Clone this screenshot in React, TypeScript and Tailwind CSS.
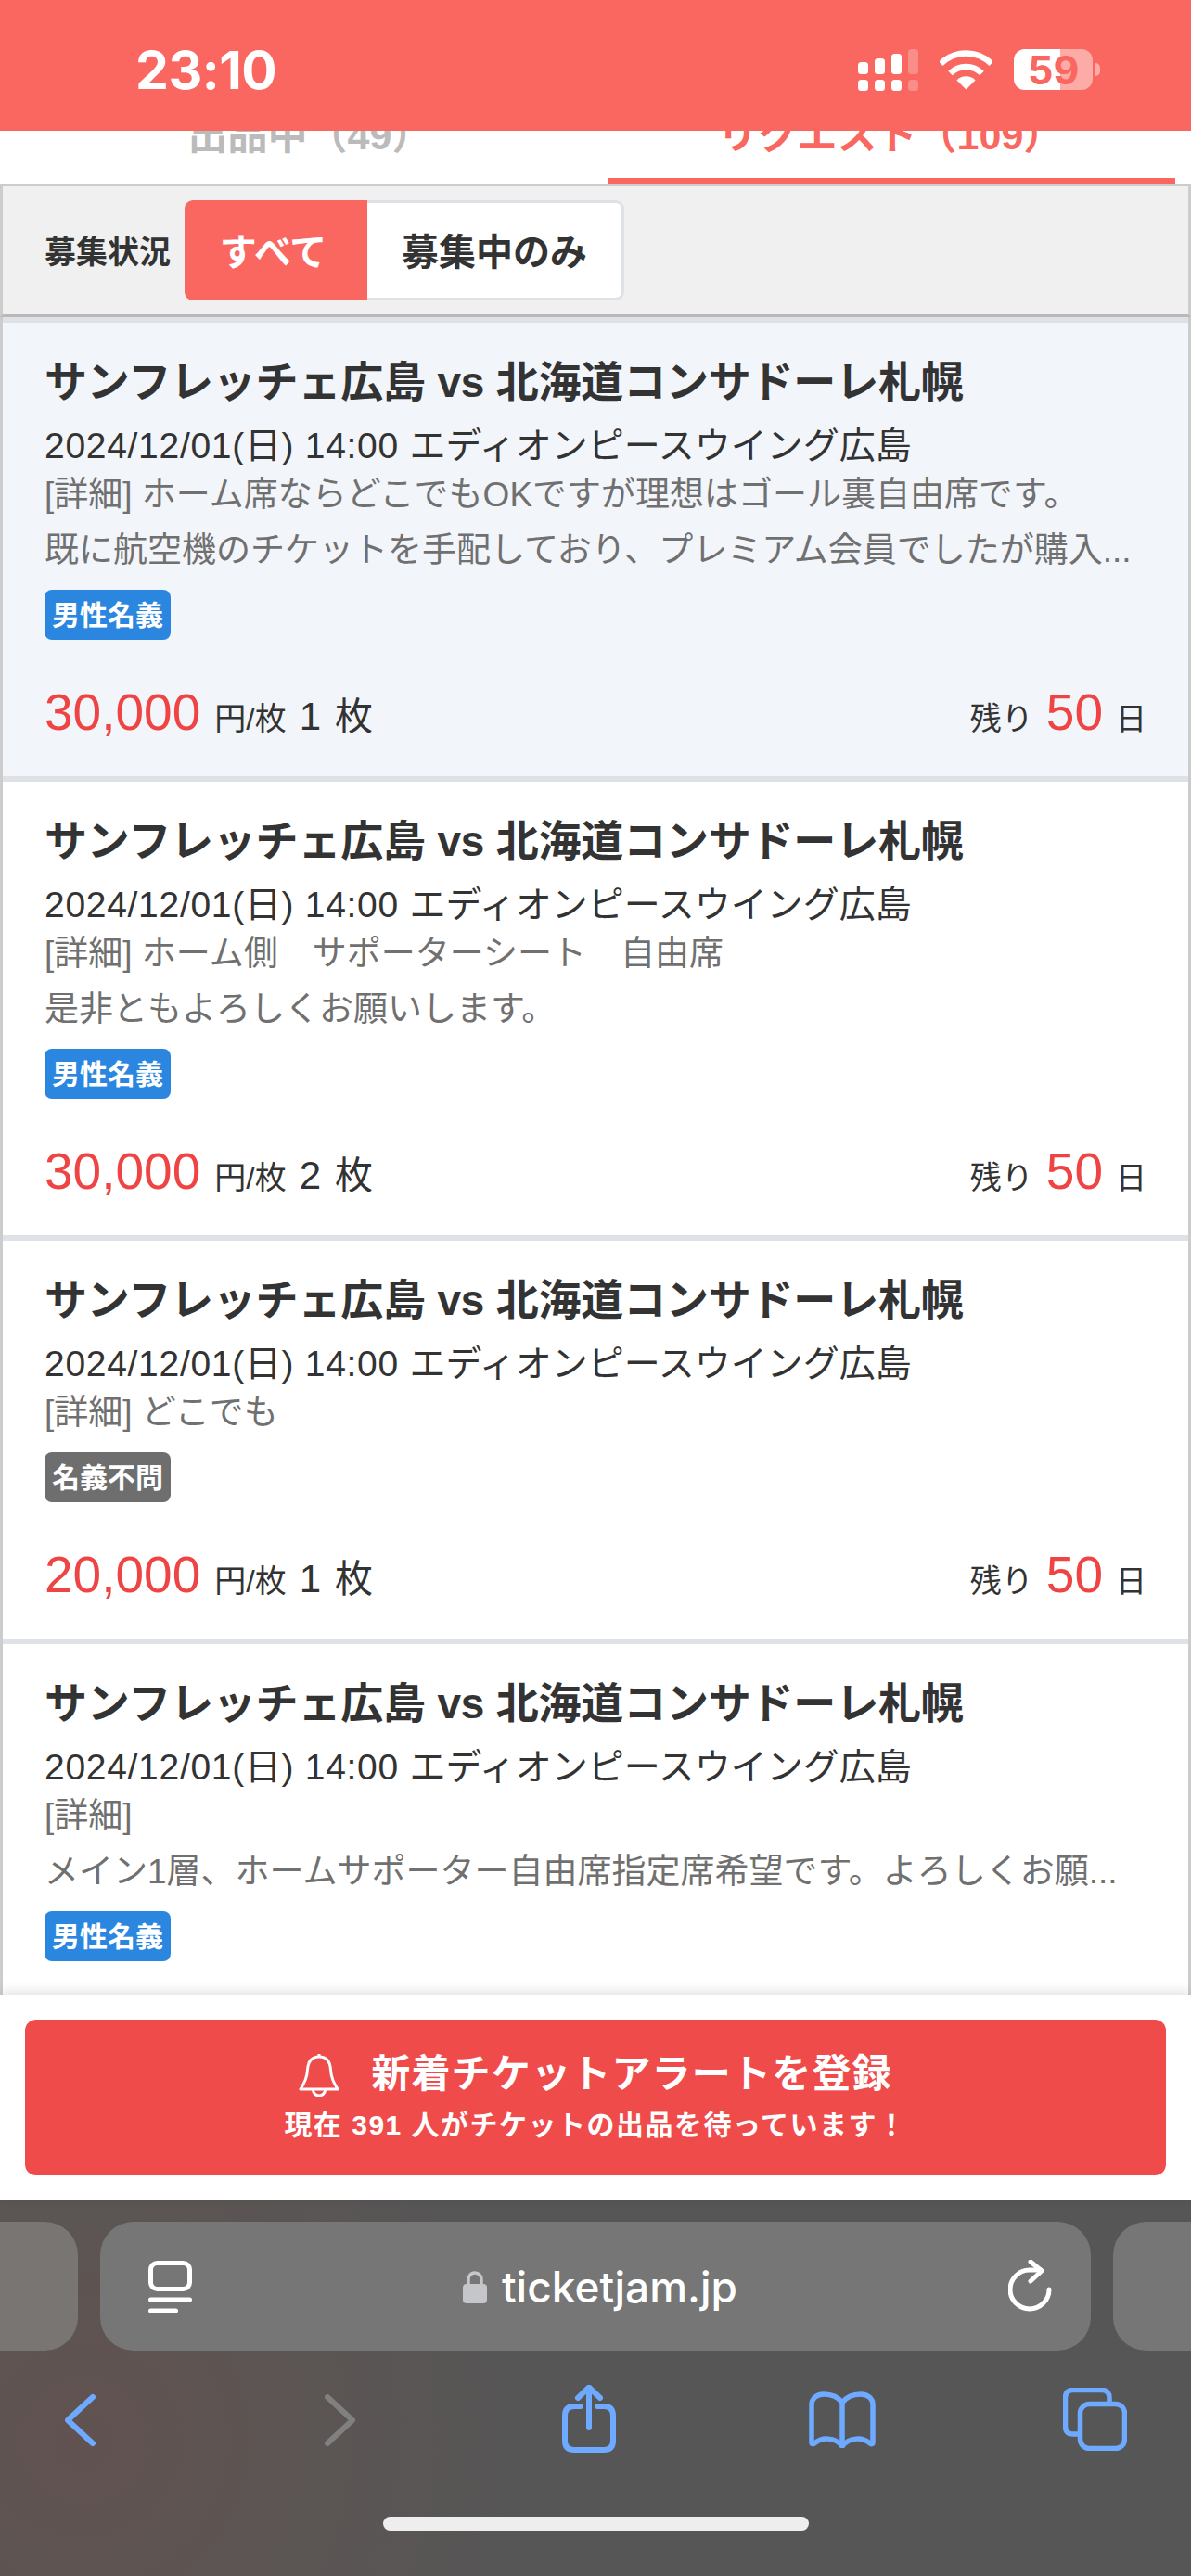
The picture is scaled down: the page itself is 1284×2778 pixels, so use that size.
const tickets = [
  {
    detail: '[詳細] ホーム席ならどこでもOKですが理想はゴール裏自由席です。',
    note: '既に航空機のチケットを手配しており、プレミアム会員でしたが購入...',
    badge: '男性名義',
    price: '30,000',
    count: 1,
    highlight: true,
  },
  {
    detail: '[詳細] ホーム側　サポーターシート　自由席',
    note: '是非ともよろしくお願いします。',
    badge: '男性名義',
    price: '30,000',
    count: 2,
  },
  { detail: '[詳細] どこでも', badge: '名義不問', price: '20,000', count: 1 },
  {
    detail: '[詳細]',
    note: 'メイン1層、ホームサポーター自由席指定席希望です。よろしくお願...',
    badge: '男性名義',
    price: '',
    count: 0,
  },
];

const StatusBar = () => (
  <div className="relative z-10 h-[141px] shrink-0 bg-[#f96760] text-white">
    <span className="absolute left-[146px] top-[46px] text-[57px] leading-[60px] font-bold tracking-[-0.5px] [font-family:Inter,sans-serif]">
      23:10
    </span>
    <svg className="absolute left-[925px] top-[53px]" width="65" height="45" viewBox="0 0 65 45" fill="#fff">
      <rect x="0" y="14" width="11" height="13" rx="3.5" />
      <rect x="18" y="10" width="11" height="17" rx="3.5" />
      <rect x="36" y="5" width="11" height="22" rx="3.5" />
      <rect x="54" y="0" width="11" height="27" rx="3.5" opacity="0.25" />
      <rect x="0" y="33" width="11" height="12" rx="3.5" />
      <rect x="18" y="33" width="11" height="12" rx="3.5" />
      <rect x="36" y="33" width="11" height="12" rx="3.5" />
      <rect x="54" y="33" width="11" height="12" rx="3.5" opacity="0.25" />
    </svg>
    <svg className="absolute left-[1013px] top-[53px]" width="57" height="44" viewBox="0 0 57 43" fill="none" stroke="#fff">
      <path d="M1.2 15.3 A38.5 38.5 0 0 1 55.8 15.3" strokeWidth="6.5" />
      <path d="M11.5 25.5 A24 24 0 0 1 45.5 25.5" strokeWidth="6.5" />
      <path d="M28.5 43 L18.5 33 A14 14 0 0 1 38.5 33 Z" fill="#fff" stroke="none" />
    </svg>
    <div className="absolute left-[1093px] top-[53px] h-[44px] w-[85px] overflow-hidden rounded-[12px] bg-white/45">
      <div className="h-full w-[50px] bg-white" />
    </div>
    <span className="absolute left-[1108px] top-[51px] text-[43px] leading-[48px] font-bold text-[#f96760] [font-family:Inter,sans-serif]">
      59
    </span>
    <div className="absolute left-[1181px] top-[68px] h-[14px] w-[5px] rounded-r-full bg-white/45" />
  </div>
);

const Tabs = () => (
  <div className="grid h-[57px] shrink-0 grid-cols-2 bg-white text-center text-[43px] leading-[50px] font-bold">
    <div className="-mt-[20px] pl-[26px] text-[#bbbbbb]">出品中（49）</div>
    <div className="flex flex-col text-[#f96760]">
      <div className="-mt-[20px] pr-[6px]">リクエスト（109）</div>
      <div className="mt-auto ml-[13px] mr-[17px] h-[6px] bg-[#f96760]" />
    </div>
  </div>
);

const FilterBar = () => (
  <div className="flex h-[144px] shrink-0 items-center border-x-[3px] border-t-[3px] border-b-[3px] border-x-[#cccccc] border-t-[#cccccc] border-b-[#b9b9b9] bg-[#f0f0f0] pl-[45px]">
    <span className="mr-[15px] pt-[4px] text-[34px] font-bold text-[#333333]">募集状況</span>
    <div className="flex h-[108px] text-[40px] font-bold">
      <div className="flex w-[197px] items-center justify-center rounded-l-[9px] bg-[#f96760] pt-[3px] pr-[6px] text-white">すべて</div>
      <div className="flex w-[277px] items-center justify-center rounded-r-[9px] border-[3px] border-l-0 border-[#dee2e6] bg-white pt-[3px] text-[#333333]">
        募集中のみ
      </div>
    </div>
  </div>
);

type Ticket = (typeof tickets)[number];

const TicketCard = ({ ticket }: { ticket: Ticket }) => (
  <div
    className={`border-b-[6px] border-[#dee2e6] px-[45px] pt-[36px] pb-[36px] ${
      ticket.highlight ? 'bg-[#f2f5fa]' : 'bg-white'
    }`}
  >
    <div className="text-[46px] leading-[56px] font-bold tracking-[-0.2px] text-[#333333]">サンフレッチェ広島 vs 北海道コンサドーレ札幌</div>
    <div className="mt-[16px] h-[50px] text-[39px] leading-[50px] text-[#333333]">
      <span className="tracking-[0.7px]">2024/12/01(日) 14:00 </span>エディオンピースウイング広島
    </div>
    <div className="mt-[1px] h-[54px] text-[37px] leading-[54px] text-[#707070]">{ticket.detail}</div>
    {ticket.note && <div className="mt-[6px] h-[54px] text-[37px] leading-[54px] text-[#707070]">{ticket.note}</div>}
    <div
      className={`mt-[15px] flex h-[54px] w-[136px] items-center justify-center rounded-[8px] text-[30px] font-bold text-white ${
        ticket.badge === '名義不問' ? 'bg-[#6e6e6e]' : 'bg-[#2b86e0]'
      }`}
    >
      {ticket.badge}
    </div>
    {ticket.price && (
      <div className="mt-[45px] flex h-[66px] items-baseline justify-between text-[#333333]">
        <div className="leading-[66px]">
          <span className="text-[55px] text-[#ef4444]">{ticket.price}</span>
          <span className="ml-[15px] text-[34px]">円/枚</span>
          <span className="ml-[14px] text-[42px]">{ticket.count}</span>
          <span className="ml-[15px] text-[41px]">枚</span>
        </div>
        <div className="leading-[66px]">
          <span className="text-[34px]">残り</span>
          <span className="ml-[14px] text-[55px] text-[#ef4444]">50</span>
          <span className="ml-[14px] text-[33px]">日</span>
        </div>
      </div>
    )}
  </div>
);

const AlertPanel = () => (
  <div className="relative z-[1] h-[221px] shrink-0 bg-white px-[27px] pt-[27px] shadow-[0_-3px_12px_rgba(0,0,0,0.12)]">
    <div className="flex h-[168px] flex-col items-center rounded-[12px] bg-[#f04b4b] pt-[33px] font-bold text-white">
      <div className="flex h-[52px] items-center">
        <svg className="mr-[34px]" width="44" height="47" viewBox="0 0 44 47" fill="none" stroke="#fff" strokeWidth="3">
          <path d="M22 1v3" />
          <path d="M22 4C13 4 10 11 9.5 18 9 27 6 32 2 39h40c-4-7-7-12-7.500-21C34 11 31 4 22 4Z" strokeLinejoin="round" />
          <path d="M15.500 39.500a6.500 6.500 0 0 0 13 0" />
        </svg>
        <span className="text-[42px] leading-[52px] tracking-[1.2px]">新着チケットアラートを登録</span>
      </div>
      <div className="mt-[9px] text-[30px] leading-[40px] tracking-[1.5px]">現在 391 人がチケットの出品を待っています！</div>
    </div>
  </div>
);

const SafariChrome = () => (
  <div className="h-[406px] shrink-0 bg-[radial-gradient(circle_at_90px_260px,#615250_0%,#5c5553_18%,#565656_40%)] pt-[24px]">
    <div className="flex h-[139px] gap-[24px]">
      <div className="w-[84px] shrink-0 rounded-r-[36px] bg-[#787573]" />
      <div className="flex w-[1068px] shrink-0 items-center rounded-[36px] bg-[#767676] pl-[52px] pr-[39px] text-white">
        <svg width="47" height="56" viewBox="0 0 47 56" fill="none" stroke="#fff" strokeWidth="5" strokeLinecap="round">
          <rect x="2.500" y="2.500" width="42" height="28" rx="7" />
          <path d="M2.500 42h42M2.500 54h27" />
        </svg>
        <div className="flex flex-1 items-center justify-center">
          <svg className="mr-[16px]" width="26" height="36" viewBox="0 0 26 36">
            <path d="M6 16v-6a7 7 0 0 1 14 0v6" fill="none" stroke="#c5c6ca" strokeWidth="3.500" />
            <rect x="0" y="15" width="26" height="21" rx="4" fill="#c5c6ca" />
          </svg>
          <span className="text-[46px] leading-[56px] font-medium [font-family:Inter,sans-serif]">ticketjam.jp</span>
        </div>
        <svg width="50" height="58" viewBox="0 0 50 58" fill="none" stroke="#fff" strokeWidth="5" strokeLinecap="round" strokeLinejoin="round">
          <path d="M44 32a21 21 0 1 1-21-21h12" />
          <path d="M24 2l12 10-12 11" />
        </svg>
      </div>
      <div className="flex-1 rounded-l-[36px] bg-[#767676]" />
    </div>
    <div className="mt-[37px] flex h-[73px] items-start pl-[70px]">
      <svg className="mt-[10px]" width="33" height="56" viewBox="0 0 33 56" fill="none" stroke="#6eaaff" strokeWidth="6" strokeLinecap="round" strokeLinejoin="round">
        <path d="M30 3 3 28l27 25" />
      </svg>
      <svg className="ml-[247px] mt-[10px]" width="33" height="56" viewBox="0 0 33 56" fill="none" stroke="#808080" strokeWidth="6" strokeLinecap="round" strokeLinejoin="round">
        <path d="M3 3l27 25L3 53" />
      </svg>
      <svg className="ml-[223px]" width="58" height="73" viewBox="0 0 58 73" fill="none" stroke="#6eaaff" strokeWidth="6" strokeLinecap="round" strokeLinejoin="round">
        <path d="M20 23h-7Q3 23 3 33v27q0 10 10 10h32q10 0 10-10V33q0-10-10-10h-7" />
        <path d="M29 46V3M17 14 29 2.500 41 14" />
      </svg>
      <svg className="ml-[208px] mt-[7px]" width="72" height="61" viewBox="0 0 72 61" fill="none" stroke="#6eaaff" strokeWidth="5.500" strokeLinecap="round" strokeLinejoin="round">
        <path d="M36 12v44" />
        <path d="M36 12C31 5 23 3 16 3 8 3 3 8 3 14v41c0 2 2 2 3 1 8-7 22-7 30 3" />
        <path d="M36 12c5-7 13-9 20-9 8 0 13 5 13 11v41c0 2-2 2-3 1-8-7-22-7-30 3" />
      </svg>
      <svg className="ml-[202px] mt-[3px]" width="69" height="68" viewBox="0 0 69 68" fill="none" stroke="#6eaaff" strokeWidth="5.500">
        <rect x="18.500" y="17.500" width="48" height="48" rx="10" />
        <path d="M16 50h-5q-8.500 0-8.500-8V11q0-8.500 8.500-8.500h31q8 0 8 8.500v4" />
      </svg>
    </div>
    <div className="mx-auto mt-[69px] h-[15px] w-[459px] rounded-full bg-[#eeeeee]" />
  </div>
);

const App = () => {
  return (
    <div className="flex h-[2778px] w-[1284px] flex-col overflow-hidden bg-white [font-family:'Liberation_Sans','Noto_Sans_CJK_JP',sans-serif]">
      <StatusBar />
      <Tabs />
      <FilterBar />
      <div className="min-h-0 flex-1 overflow-hidden border-x-[3px] border-[#cccccc]">
        <div className="h-[6px] bg-[#dee2e6]" />
        {tickets.map((ticket, i) => (
          <TicketCard key={i} ticket={ticket} />
        ))}
      </div>
      <AlertPanel />
      <SafariChrome />
    </div>
  );
};

export default App;
